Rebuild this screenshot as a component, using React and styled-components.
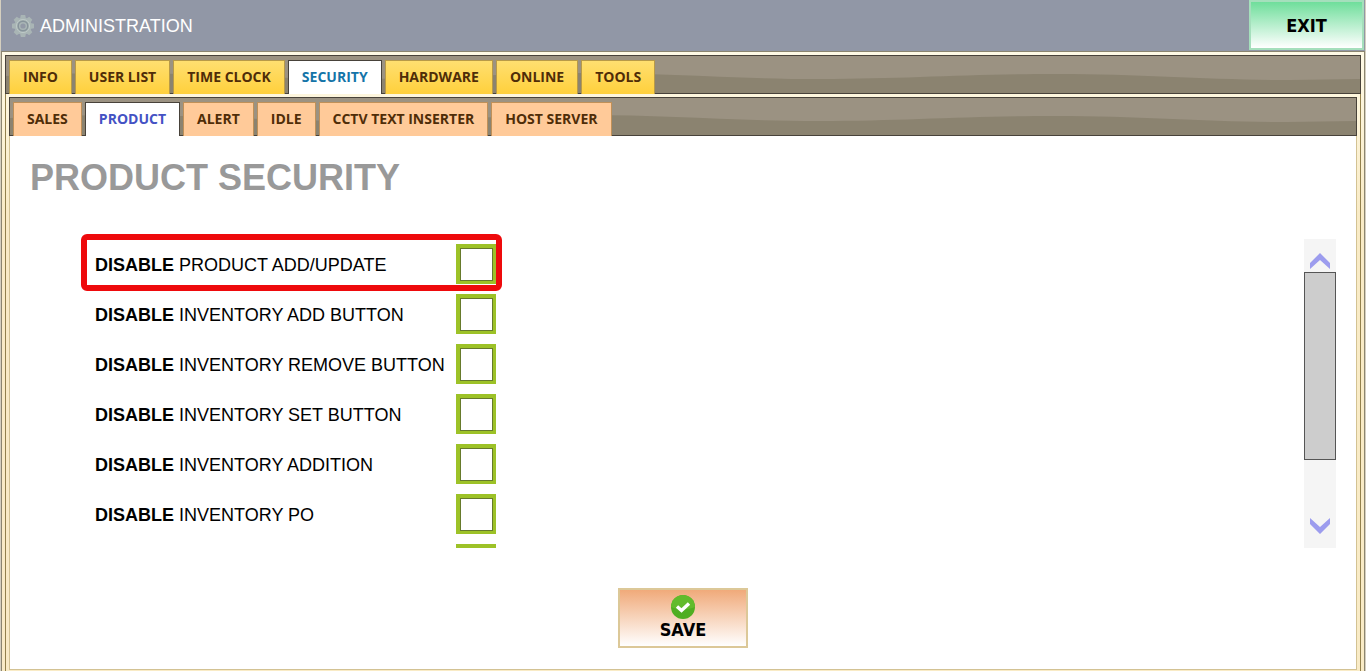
import React, { useState } from "react";
import styled, { createGlobalStyle } from "styled-components";

const mainTabs = ["INFO", "USER LIST", "TIME CLOCK", "SECURITY", "HARDWARE", "ONLINE", "TOOLS"];
const subTabs = ["SALES", "PRODUCT", "ALERT", "IDLE", "CCTV TEXT INSERTER", "HOST SERVER"];
const options = [
  "PRODUCT ADD/UPDATE",
  "INVENTORY ADD BUTTON",
  "INVENTORY REMOVE BUTTON",
  "INVENTORY SET BUTTON",
  "INVENTORY ADDITION",
  "INVENTORY PO",
  "",
];

const teeth = [0, 45, 90, 135, 180, 225, 270, 315];

function Gear() {
  return (
    <svg width="24" height="24" viewBox="0 0 24 24" aria-hidden="true">
      <g fill="#a9b5b5">
        {teeth.map((angle) => (
          <path key={angle} d="M9 5 9.800 1h4.400L15 5z" transform={`rotate(${angle} 12 12)`} />
        ))}
        <circle cx="12" cy="12" r="8.600" />
      </g>
      <circle cx="12" cy="12" r="6.600" fill="none" stroke="#bcc8c6" />
      <circle cx="12" cy="12" r="4.800" fill="none" stroke="#87949b" strokeWidth="1.400" />
      <circle cx="12" cy="12" r="2.600" fill="#9299a6" />
    </svg>
  );
}

function Wave() {
  return (
    <WaveSvg viewBox="0 0 1354 37" preserveAspectRatio="none" aria-hidden="true">
      <path
        d="M0 20C40 18 70 17 110 17C190 17 260 23 344 23C430 23 500 17 579 17C660 17 730 23 814 23C900 23 960 18 1050 18C1140 18 1200 24 1284 24L1354 23V37H0Z"
        fill="#8b8370"
      />
    </WaveSvg>
  );
}

function TabBar({ tabs, active, onChange, tone, label }) {
  return (
    <Bar aria-label={label}>
      <Wave />
      {tabs.map((tab) => (
        <Tab
          key={tab}
          type="button"
          $tone={tone}
          $active={tab === active}
          onClick={() => onChange(tab)}
        >
          {tab}
        </Tab>
      ))}
    </Bar>
  );
}

export default function App() {
  const [mainTab, setMainTab] = useState("SECURITY");
  const [subTab, setSubTab] = useState("PRODUCT");
  const [checked, setChecked] = useState({});

  const toggle = (index) => {
    setChecked({ ...checked, [index]: !checked[index] });
  };

  return (
    <>
      <GlobalStyle />
      <Page>
        <Header>
          <Title>
            <Gear />
            <span>ADMINISTRATION</span>
          </Title>
          <ExitButton type="button">EXIT</ExitButton>
        </Header>
        <Frame>
          <TabBar label="Administration" tabs={mainTabs} active={mainTab} onChange={setMainTab} tone="gold" />
          <SubFrame>
            <TabBar label="Security" tabs={subTabs} active={subTab} onChange={setSubTab} tone="peach" />
            <Panel>
              <h1>PRODUCT SECURITY</h1>
              <ScrollArea>
                <OptionList>
                  {options.map((option, index) => (
                    <Option key={index}>
                      <span>
                        {option && (
                          <>
                            <b>DISABLE</b> {option}
                          </>
                        )}
                      </span>
                      <Checkbox
                        type="checkbox"
                        aria-label={option ? undefined : "Disable"}
                        checked={!!checked[index]}
                        onChange={() => toggle(index)}
                      />
                    </Option>
                  ))}
                </OptionList>
                <Marker />
                <ScrollBar>
                  <ArrowButton type="button" aria-label="Scroll up" $align="flex-end">
                    <svg width="20" height="16" viewBox="0 0 20 16">
                      <path d="M0 10 10 0l10 10v6L10 7 0 16z" fill="#9c9cee" />
                    </svg>
                  </ArrowButton>
                  <div className="track">
                    <div className="thumb" />
                  </div>
                  <ArrowButton type="button" aria-label="Scroll down" $align="flex-start">
                    <svg width="20" height="16" viewBox="0 0 20 16">
                      <path d="M0 0 10 9 20 0v6L10 16 0 6z" fill="#9c9cee" />
                    </svg>
                  </ArrowButton>
                </ScrollBar>
              </ScrollArea>
              <SaveButton type="button">
                <svg width="24" height="24" viewBox="0 0 24 24" aria-hidden="true">
                  <circle cx="12" cy="12" r="12" fill="#4fae22" />
                  <path d="M0 12a12 12 0 0 1 24 0c-7 3-17 3-24 0z" fill="#62bb2c" />
                  <path d="m6 11.500 4.500 4L18 8.500" fill="none" stroke="#fff" strokeWidth="3.400" />
                </svg>
                <span>SAVE</span>
              </SaveButton>
            </Panel>
          </SubFrame>
        </Frame>
      </Page>
    </>
  );
}

const GlobalStyle = createGlobalStyle`
  * {
    box-sizing: border-box;
  }
  body {
    margin: 0;
    background: #fff;
    color: #000;
    font-family: "Liberation Sans", Arial, sans-serif;
  }
  button {
    cursor: pointer;
  }
`;

const Page = styled.div`
  min-height: 100vh;
  display: flex;
  flex-direction: column;
  padding: 0 1px;
  background-color: #d5cfbf;
`;

const Header = styled.header`
  height: 51px;
  display: flex;
  justify-content: space-between;
  align-items: flex-start;
  padding: 0 1px 0 10px;
  background-color: #9197a6;
`;

const Title = styled.div`
  height: 51px;
  display: flex;
  align-items: center;
  gap: 5px;
  color: #fff;
  font-size: 18px;
  span {
    padding-top: 2px;
  }
`;

const ExitButton = styled.button`
  width: 115px;
  height: 50px;
  border: 2px solid #a5dfbc;
  background: linear-gradient(#6fde9b, #fff);
  color: #000;
  font: bold 18px "DejaVu Sans Condensed", Tahoma, sans-serif;
`;

const Frame = styled.main`
  flex: 1;
  display: flex;
  flex-direction: column;
  padding: 3px 3px 0;
  border: 1px solid #8b8570;
  border-bottom: none;
  background: linear-gradient(#fffae6, #f9ebc6 160px);
`;

const Bar = styled.nav`
  position: relative;
  height: 39px;
  display: flex;
  align-items: flex-end;
  gap: 3px;
  padding: 0 3px;
  border: 1px solid #48423a;
  background-color: #9b9282;
`;

const WaveSvg = styled.svg`
  position: absolute;
  inset: 0;
  width: 100%;
  height: 100%;
`;

const tones = {
  gold: {
    background: "linear-gradient(#ffdf70, #ffd03c)",
    border: "#b89a48",
    active: "#1474a8",
  },
  peach: {
    background: "#ffca99",
    border: "#c09058",
    active: "#4452c4",
  },
};

const Tab = styled.button`
  position: relative;
  height: 34px;
  margin-bottom: -1px;
  padding: 0 13px 2px;
  border: 1px solid ${({ $tone, $active }) => ($active ? "#48423a" : tones[$tone].border)};
  border-bottom: none;
  background: ${({ $tone, $active }) => ($active ? "#fff" : tones[$tone].background)};
  color: ${({ $tone, $active }) => ($active ? tones[$tone].active : "#4f2d08")};
  font: bold 14px "Open Sans", "Segoe UI", sans-serif;
  white-space: nowrap;
`;

const SubFrame = styled.div`
  flex: 1;
  display: flex;
  flex-direction: column;
  padding: 3px 3px 1px;
  border: 1px solid #92804c;
  border-width: 0 1px;
`;

const Panel = styled.section`
  flex: 1;
  display: flex;
  flex-direction: column;
  padding: 20px 20px 21px;
  border: 1px solid #d3c293;
  border-top: none;
  background-color: #fff;
  h1 {
    margin: 0;
    color: #999;
    font-size: 36px;
    line-height: 44px;
  }
`;

const ScrollArea = styled.div`
  position: relative;
  height: 309px;
  display: flex;
  justify-content: space-between;
  margin-top: 39px;
  padding-left: 51px;
`;

const OptionList = styled.div`
  width: 421px;
  height: 100%;
  overflow: hidden;
`;

const Option = styled.label`
  height: 50px;
  display: flex;
  align-items: center;
  justify-content: space-between;
  padding: 0 6px 0 14px;
  font-size: 18px;
  span {
    padding-top: 2px;
  }
`;

const Checkbox = styled.input`
  appearance: none;
  width: 40px;
  height: 40px;
  margin: 0;
  border: 4px solid #9dc227;
  border-width: 4px 3px 3px 4px;
  box-shadow: inset 0 0 0 1px #667a2c;
  background-color: #fff;
  &:checked {
    background: radial-gradient(#4fae22 50%, #fff 52%);
  }
`;

const Marker = styled.div`
  position: absolute;
  top: -5px;
  left: 51px;
  width: 421px;
  height: 57px;
  border: 6px solid #ee0a0c;
  border-radius: 6px;
  pointer-events: none;
`;

const ScrollBar = styled.div`
  width: 32px;
  display: flex;
  flex-direction: column;
  background-color: #f5f5f5;
  .track {
    flex: 1;
  }
  .thumb {
    height: 188px;
    border: 1px solid #555;
    background-color: #cdcdcd;
  }
`;

const ArrowButton = styled.button`
  height: 33px;
  display: flex;
  justify-content: center;
  align-items: ${({ $align }) => $align};
  padding: 3px 0;
  border: none;
  background: none;
`;

const SaveButton = styled.button`
  width: 130px;
  height: 60px;
  display: flex;
  flex-direction: column;
  align-items: center;
  margin: 40px auto 0;
  padding: 5px 0 0;
  border: 2px solid #dcc898;
  background: linear-gradient(#f0aa7a, #fff);
  color: #000;
  font: bold 18px/22px "DejaVu Sans Condensed", Tahoma, sans-serif;
`;
